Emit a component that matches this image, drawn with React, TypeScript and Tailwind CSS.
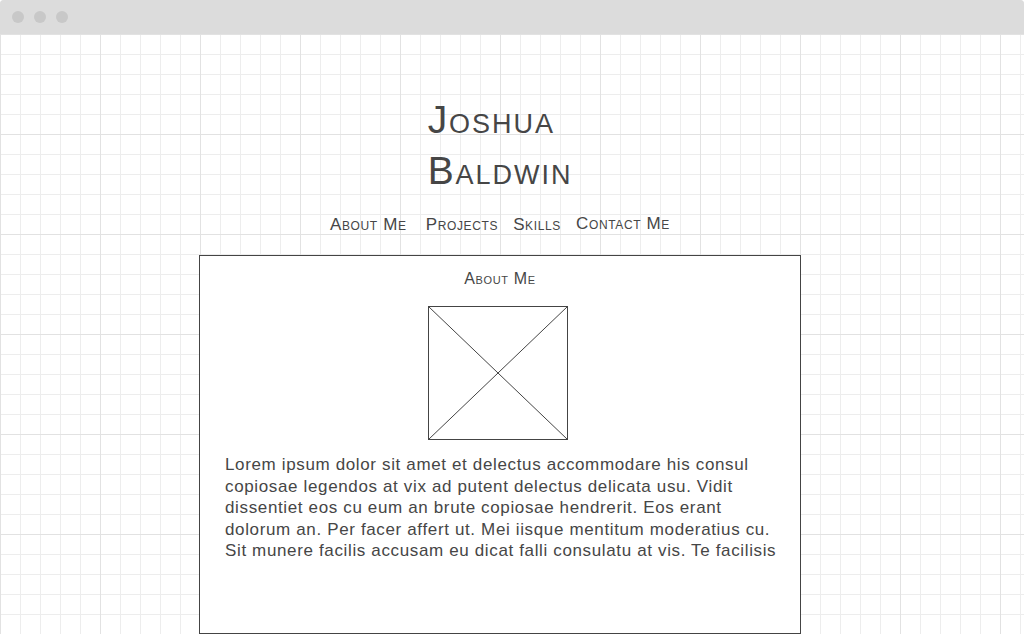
import React from 'react';

const navItems = [
  { label: 'About Me', cls: 'mr-[19px]' },
  { label: 'Projects', cls: 'mr-[15px]' },
  { label: 'Skills', cls: 'mr-[15px]' },
  { label: 'Contact Me', cls: '-translate-y-px' },
];

const lorem =
  'Lorem ipsum dolor sit amet et delectus accommodare his consul copiosae legendos at vix ad putent delectus delicata usu. Vidit dissentiet eos cu eum an brute copiosae hendrerit. Eos erant dolorum an. Per facer affert ut. Mei iisque mentitum moderatius cu. Sit munere facilis accusam eu dicat falli consulatu at vis. Te facilisis';

function ImagePlaceholder() {
  return (
    <svg width="140" height="134" viewBox="0 0 140 134" className="block">
      <rect x="0.5" y="0.5" width="139" height="133" fill="white" stroke="#444" strokeWidth="1" />
      <line x1="0.5" y1="0.5" x2="139.5" y2="133.5" stroke="#444" strokeWidth="1" />
      <line x1="139.5" y1="0.5" x2="0.5" y2="133.5" stroke="#444" strokeWidth="1" />
    </svg>
  );
}

export default function App() {
  return (
    <div className="h-[638px] w-[1026px] overflow-hidden bg-white font-['Liberation_Sans',Arial,sans-serif] tracking-[0.04em] text-[#464646]">
      <div className="w-[1024px] rounded-t-[4px] bg-[#e8e8e8]">
        {/* title bar */}
        <div className="flex h-[34px] items-center gap-[10px] rounded-t-[4px] bg-[#dcdcdc] pl-[12px]">
          <span className="h-[12px] w-[12px] rounded-full bg-[#c8c8c8]" />
          <span className="h-[12px] w-[12px] rounded-full bg-[#c8c8c8]" />
          <span className="h-[12px] w-[12px] rounded-full bg-[#c8c8c8]" />
        </div>

        {/* canvas */}
        <div className="h-[600px] overflow-hidden bg-white bg-[image:linear-gradient(to_right,#e2e2e2_1px,transparent_1px),linear-gradient(to_bottom,#e2e2e2_1px,transparent_1px),linear-gradient(to_right,#ededed_1px,transparent_1px),linear-gradient(to_bottom,#ededed_1px,transparent_1px)] bg-[size:100px_100px,100px_100px,20px_20px,20px_20px]">
          <div className="ml-[199px] flex w-[602px] flex-col items-center pt-[60px]">
            <h1 className="text-left text-[39px] leading-[51px] font-normal tracking-[0.05em] [font-variant:small-caps]">
              Joshua
              <br />
              Baldwin
            </h1>

            <nav className="mt-[19px] flex text-[17px] leading-[20px] [font-variant:small-caps]">
              {navItems.map((n) => (
                <span key={n.label} className={n.cls}>
                  {n.label}
                </span>
              ))}
            </nav>

            <section className="mt-[20px] flex h-[379px] w-[602px] flex-col items-center border border-[#444] bg-white pt-[13px]">
              <h2 className="text-[16px] leading-[20px] font-normal [font-variant:small-caps]">About Me</h2>
              <div className="mt-[17px] mr-[4px]">
                <ImagePlaceholder />
              </div>
              <p className="mt-[14px] box-content w-[556px] self-start pl-[25px] text-[17px] leading-[21.5px]">
                {lorem}
              </p>
            </section>
          </div>
        </div>
      </div>
    </div>
  );
}
